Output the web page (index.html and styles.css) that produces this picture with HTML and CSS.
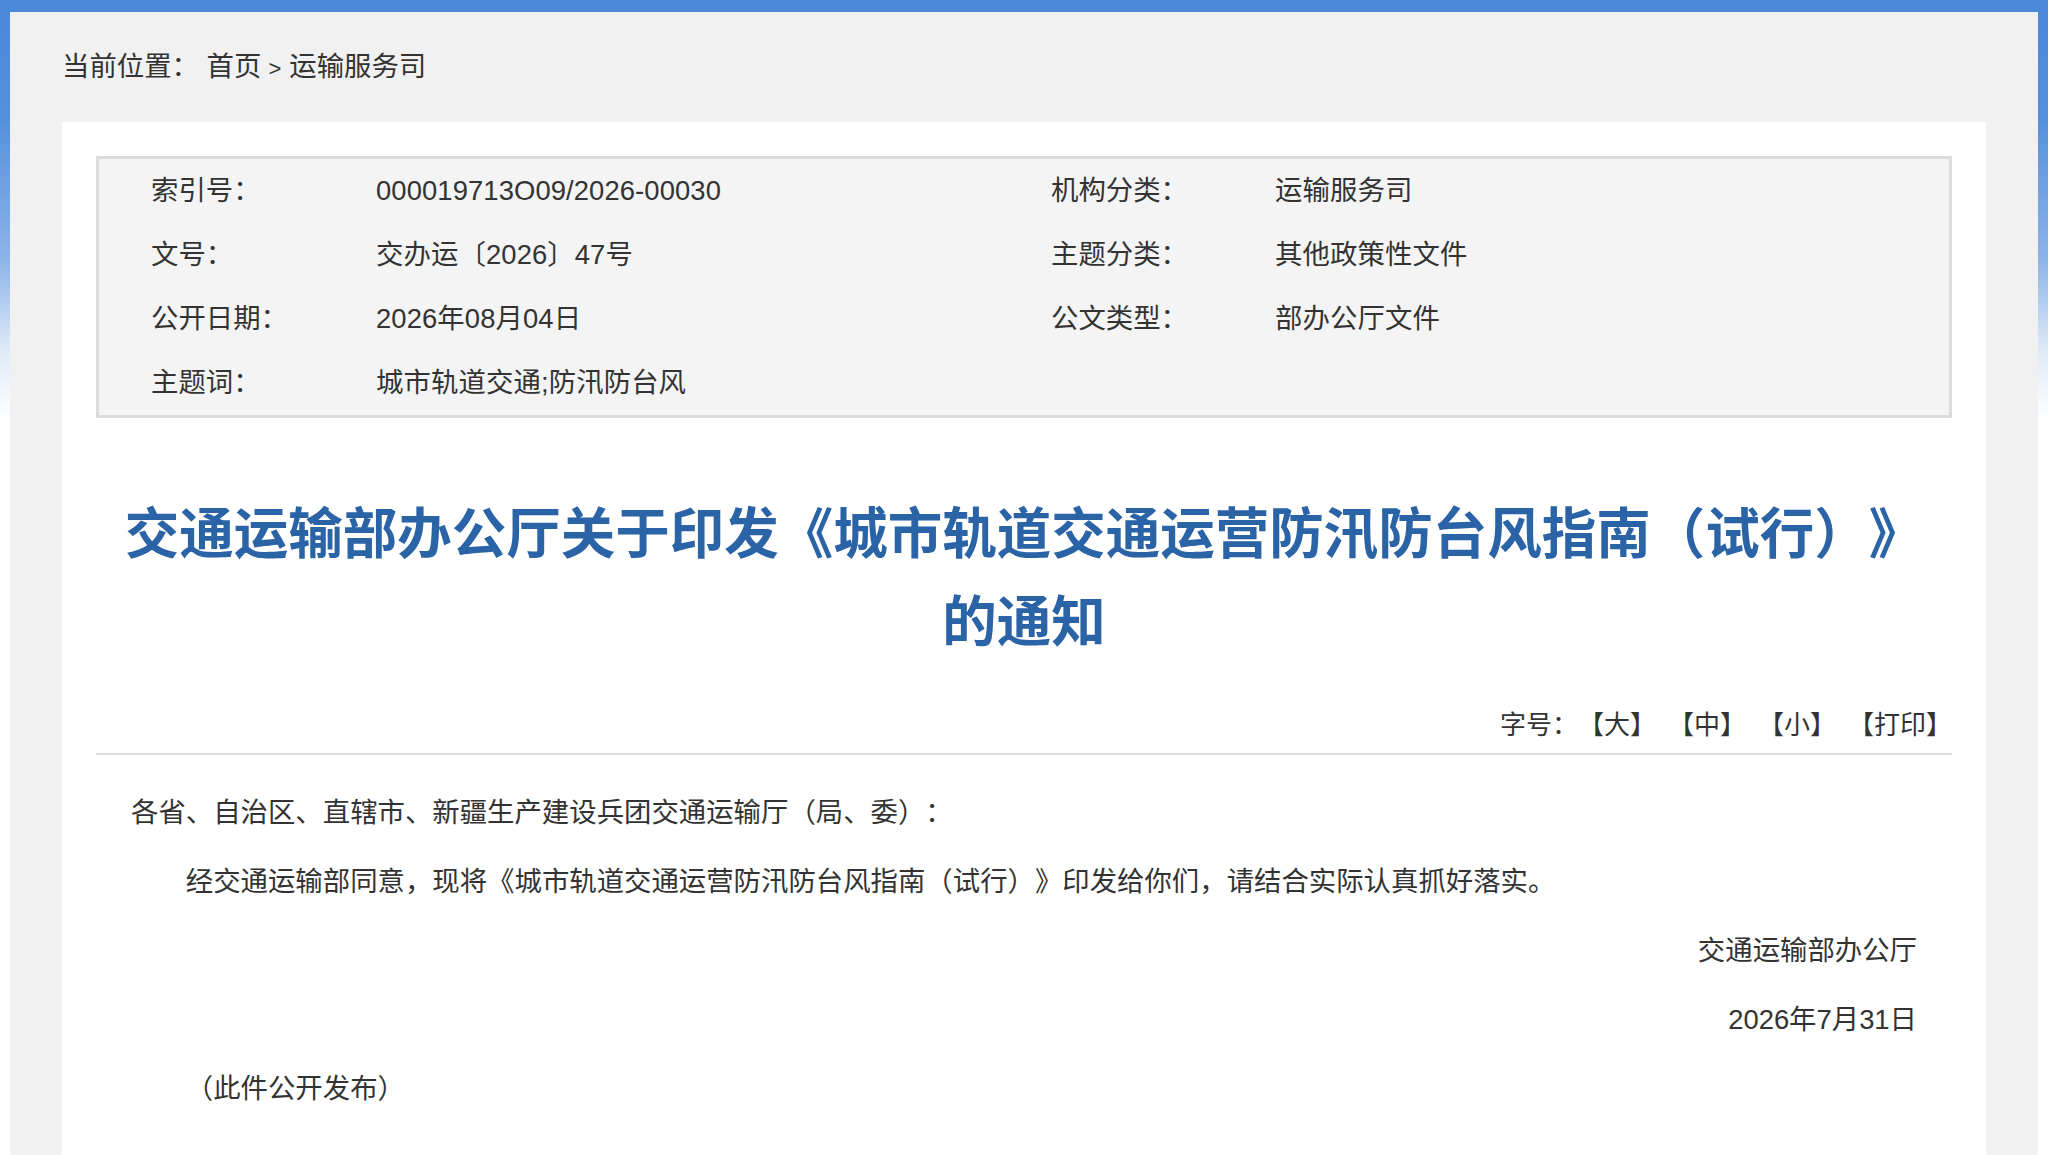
FILE: index.html
```html
<!DOCTYPE html>
<html lang="zh-CN">
<head>
<meta charset="utf-8">
<title>交通运输部办公厅关于印发《城市轨道交通运营防汛防台风指南（试行）》的通知</title>
<link rel="stylesheet" href="styles.css">
</head>
<body>
<div class="page">
  <div class="crumb">
    <span class="crumb-label">当前位置：</span>
    <a class="crumb-link" href="#">首页</a><span class="sep">&gt;</span><a class="crumb-link" href="#">运输服务司</a>
  </div>
  <div class="panel">
    <div class="meta">
      <div class="m-label">索引号：</div>
      <div class="m-value">000019713O09/2026-00030</div>
      <div class="m-label">机构分类：</div>
      <div class="m-value">运输服务司</div>

      <div class="m-label">文号：</div>
      <div class="m-value">交办运〔2026〕47号</div>
      <div class="m-label">主题分类：</div>
      <div class="m-value">其他政策性文件</div>

      <div class="m-label">公开日期：</div>
      <div class="m-value">2026年08月04日</div>
      <div class="m-label">公文类型：</div>
      <div class="m-value">部办公厅文件</div>

      <div class="m-label">主题词：</div>
      <div class="m-value">城市轨道交通;防汛防台风</div>
      <div class="m-label"></div>
      <div class="m-value"></div>
    </div>

    <h1 class="title">交通运输部办公厅关于印发《城市轨道交通运营防汛防台风指南（试行）》<br>的通知</h1>

    <div class="tools">
      <span class="tools-label">字号：</span><a class="tool" href="#">【大】</a><a class="tool" href="#">【中】</a><a class="tool" href="#">【小】</a><a class="tool" href="#">【打印】</a>
    </div>

    <div class="content">
      <p class="salute">各省、自治区、直辖市、新疆生产建设兵团交通运输厅（局、委）：</p>
      <p class="indent">经交通运输部同意，现将《城市轨道交通运营防汛防台风指南（试行）》印发给你们，请结合实际认真抓好落实。</p>
      <p class="right">交通运输部办公厅</p>
      <p class="right">2026年7月31日</p>
      <p class="indent">（此件公开发布）</p>
    </div>
  </div>
</div>
</body>
</html>
```
FILE: styles.css
```css
html, body {
  height: 100%;
}

body {
  margin: 0;
  padding: 12px 10px 0 10px;
  box-sizing: border-box;
  background: linear-gradient(180deg, #4a88d9 0px, #5690dc 120px, #8db4e8 260px, #dfeaf8 350px, #ffffff 420px) no-repeat, #ffffff;
  font-family: "Liberation Sans", "Noto Sans CJK SC", sans-serif;
  color: #333333;
  overflow: hidden;
  text-spacing-trim: space-all;
}

.page {
  background: #f1f1f1;
  padding: 0 52px;
  min-height: 100%;
  display: flex;
  flex-direction: column;
}

.crumb {
  padding: 35px 0 33px 0;
  line-height: 40px;
  font-size: 27.4px;
  color: #333333;
  white-space: nowrap;
}

.crumb-link {
  color: #333333;
  text-decoration: none;
}

.sep {
  font-size: 22px;
  margin: 0 8px 0 7px;
  color: #333333;
}

.panel {
  flex: 1;
  background: #ffffff;
  padding: 34px 34px 40px 34px;
}

.meta {
  border: 3px solid #dcdcdc;
  background: #f4f4f4;
  padding-left: 52px;
  display: grid;
  grid-template-columns: 225px 675px 224px 1fr;
  grid-auto-rows: 64px;
  font-size: 27.4px;
  line-height: 64px;
  color: #333333;
}

.m-label,
.m-value {
  white-space: nowrap;
}

.m-value {
  letter-spacing: 0.1px;
}

.title {
  margin: 68px 0 0 0;
  padding: 0;
  font-size: 54.5px;
  line-height: 88px;
  font-weight: 700;
  color: #2b63a7;
  text-align: center;
  white-space: nowrap;
  font-family: "Noto Sans CJK SC", sans-serif;
}

.tools {
  margin-top: 43px;
  padding-bottom: 8px;
  border-bottom: 2px solid #dddddd;
  text-align: right;
  font-size: 26px;
  line-height: 40px;
  color: #333333;
  white-space: nowrap;
}

.tool {
  color: #333333;
  text-decoration: none;
  margin-left: 12px;
}

.tools-label + .tool {
  margin-left: 0;
}

.content {
  padding: 10px 35px 0 35px;
  font-size: 27.4px;
  color: #333333;
}

.content p {
  margin: 27px 0;
  line-height: 42px;
}

.content .indent {
  text-indent: 2em;
}

.content .right {
  text-align: right;
}
```
